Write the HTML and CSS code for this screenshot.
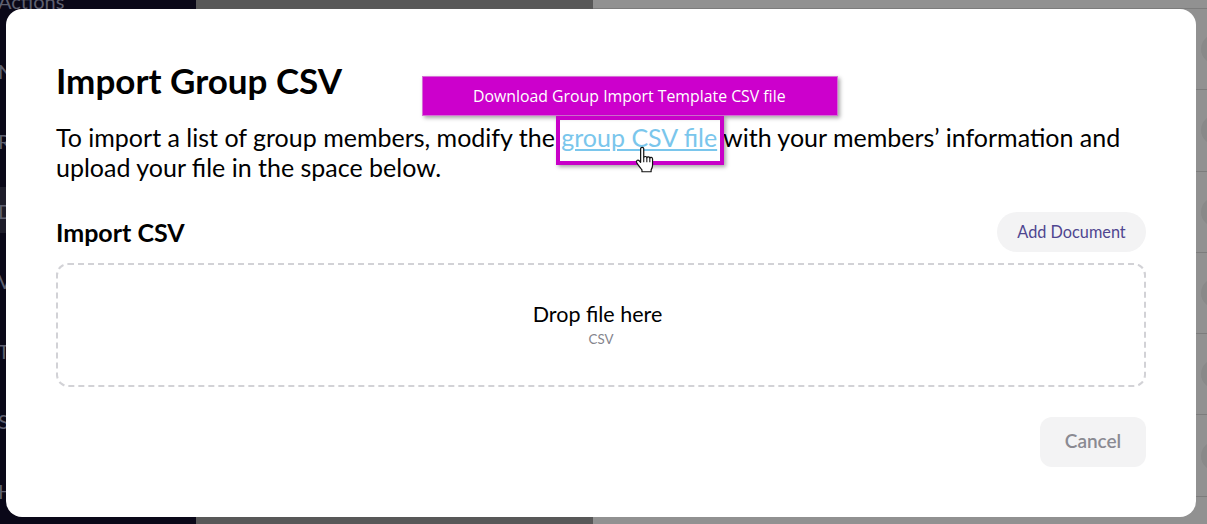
FILE: index.html
```html
<!DOCTYPE html>
<html lang="en">
<head>
    <meta charset="UTF-8">
    <meta name="viewport" content="width=device-width, initial-scale=1.0">
    <title>Import Group CSV</title>
    <link rel="stylesheet" href="styles.css">
</head>
<body>
    <!-- Page behind the overlay -->
    <div class="backdrop">
        <div class="side-nav">
            <span class="nav-item">Actions</span>
            <span class="nav-item">N</span>
            <span class="nav-item">R</span>
            <span class="nav-item nav-active">D</span>
            <span class="nav-item">V</span>
            <span class="nav-item">Ta</span>
            <span class="nav-item">Se</span>
            <span class="nav-item">H</span>
        </div>
        <div class="main-dim"></div>
        <div class="list-dim">
            <div class="list-row"><span class="row-dot"></span></div>
            <div class="list-row"><span class="row-dot"></span></div>
            <div class="list-row"><span class="row-dot"></span></div>
            <div class="list-row"><span class="row-dot"></span></div>
            <div class="list-row"><span class="row-dot"></span></div>
            <div class="list-row"><span class="row-dot"></span></div>
            <div class="list-row"></div>
        </div>
    </div>

    <div class="modal">
        <h1>Import Group CSV</h1>
        <p class="intro">To import a list of group members, modify the <a class="csv-link" href="#">group CSV file<span class="tour-tip">Download Group Import Template CSV file</span><span class="tour-box"></span><svg class="hand" width="24" height="31" viewBox="0 0 20 26">
                <path d="M5.5 2.2c0-1.5 2.6-1.5 2.6 0v7.6c.3-1.4 2.5-1.3 2.6.1.3-1.2 2.4-1.1 2.5.3.4-1 2.3-.8 2.3.6v5.4c0 1.6-.5 2.7-1.2 3.8v1.6H6.6v-1.6c-1-1.4-2.7-3.4-4.2-5.6-1.3-1.9.7-3.3 2.1-1.8l1 1.1z" fill="#fff" stroke="#111" stroke-width="1" stroke-linejoin="round"/>
                <path d="M8.1 9.8v3.8M10.7 9.9v3.7M13.2 10.2v3.4" fill="none" stroke="#111" stroke-width="0.9"/>
            </svg></a> with your members’ information and upload your file in the space below.</p>

        <div class="section-head">
            <h2>Import CSV</h2>
            <button class="add-btn" type="button">Add Document</button>
        </div>

        <div class="dropzone">
            <div class="drop-title">Drop file here</div>
            <div class="drop-hint">CSV</div>
        </div>

        <div class="modal-foot">
            <button class="cancel-btn" type="button">Cancel</button>
        </div>
    </div>
</body>
</html>
```

FILE: styles.css
```css
html, body {
    height: 100%;
}

body {
    margin: 0;
    overflow: hidden;
    position: relative;
    font-family: Lato, "Open Sans", sans-serif;
    color: #000;
}

/* Page behind the overlay */
.backdrop {
    display: flex;
    height: 100%;
    overflow: hidden;
}

.side-nav {
    width: 196px;
    background-color: #0a0818;
    display: flex;
    flex-direction: column;
    gap: 24px;
    overflow: hidden;
}

.nav-item {
    flex: none;
    height: 46px;
    text-indent: -2px;
    font-size: 20px;
    line-height: 48px;
    color: #5f6070;
}

.nav-item:first-child {
    margin-top: -23px;
}

.nav-active {
    background-color: #1e1d2a;
}

.main-dim {
    width: 397px;
    background-color: #585858;
}

.list-dim {
    flex: 1;
    background-color: #919191;
    padding-top: 8px;
    overflow: hidden;
}

.list-row {
    height: 80.3px;
    border-top: 1px solid #7c7c7c;
    display: flex;
    align-items: center;
    justify-content: flex-end;
    overflow: hidden;
}

.row-dot {
    flex: none;
    width: 30px;
    height: 30px;
    margin-right: -24px;
    border-radius: 50%;
    background-color: #898989;
}

/* Dialog */
.modal {
    position: absolute;
    top: 9px;
    left: 6px;
    width: 1190px;
    height: 508px;
    box-sizing: border-box;
    padding: 48px 50px 0;
    background-color: white;
    border-radius: 16px;
}

h1 {
    margin: 0 0 19px;
    font-size: 35px;
    line-height: 46px;
    font-weight: 700;
}

.intro {
    margin: 0 0 30px;
    font-size: 25px;
    line-height: 30px;
}

.csv-link {
    position: relative;
    color: #7ac6ec;
}

.tour-tip {
    position: absolute;
    left: -139px;
    top: -46px;
    width: 416px;
    height: 40px;
    box-sizing: border-box;
    padding-right: 2px;
    background-color: #cc00cc;
    border: 1px solid #d56ed5;
    box-shadow: 2px 2px 4px rgba(0, 0, 0, 0.35);
    color: white;
    font-family: "Open Sans", sans-serif;
    font-size: 15.85px;
    line-height: 38px;
    text-align: center;
    white-space: nowrap;
}

.tour-box {
    position: absolute;
    left: -5px;
    top: -6px;
    width: 168px;
    height: 49px;
    box-sizing: border-box;
    border: 4px solid #c800c8;
    box-shadow: 2px 2px 4px rgba(0, 0, 0, 0.35);
}

.hand {
    position: absolute;
    left: 73px;
    top: 24px;
}

.section-head {
    display: flex;
    justify-content: space-between;
    align-items: center;
    margin-bottom: 11px;
}

h2 {
    margin: 0;
    font-size: 25px;
    font-weight: 700;
}

.add-btn {
    width: 149px;
    height: 40px;
    padding: 0 0 2px;
    border: none;
    border-radius: 20px;
    background-color: #f3f3f4;
    color: #4f4690;
    font-family: Lato, sans-serif;
    font-size: 16.3px;
    font-weight: 400;
}

.dropzone {
    height: 124px;
    box-sizing: border-box;
    border: 2px dashed #d2d2d6;
    border-radius: 12px;
    display: flex;
    flex-direction: column;
    align-items: center;
    justify-content: center;
}

.drop-title {
    margin-top: -1px;
    padding-right: 7px;
    font-size: 21.5px;
    line-height: 28px;
    font-weight: 400;
}

.drop-hint {
    margin-top: 1px;
    font-size: 13.3px;
    line-height: 20px;
    color: #84848c;
}

.modal-foot {
    display: flex;
    justify-content: flex-end;
    margin-top: 30px;
}

.cancel-btn {
    width: 106px;
    height: 50px;
    padding: 0 0 3px;
    border: none;
    border-radius: 12px;
    background-color: #f3f3f4;
    color: #8a8a92;
    font-family: Lato, sans-serif;
    font-size: 19px;
    font-weight: 600;
}
```
